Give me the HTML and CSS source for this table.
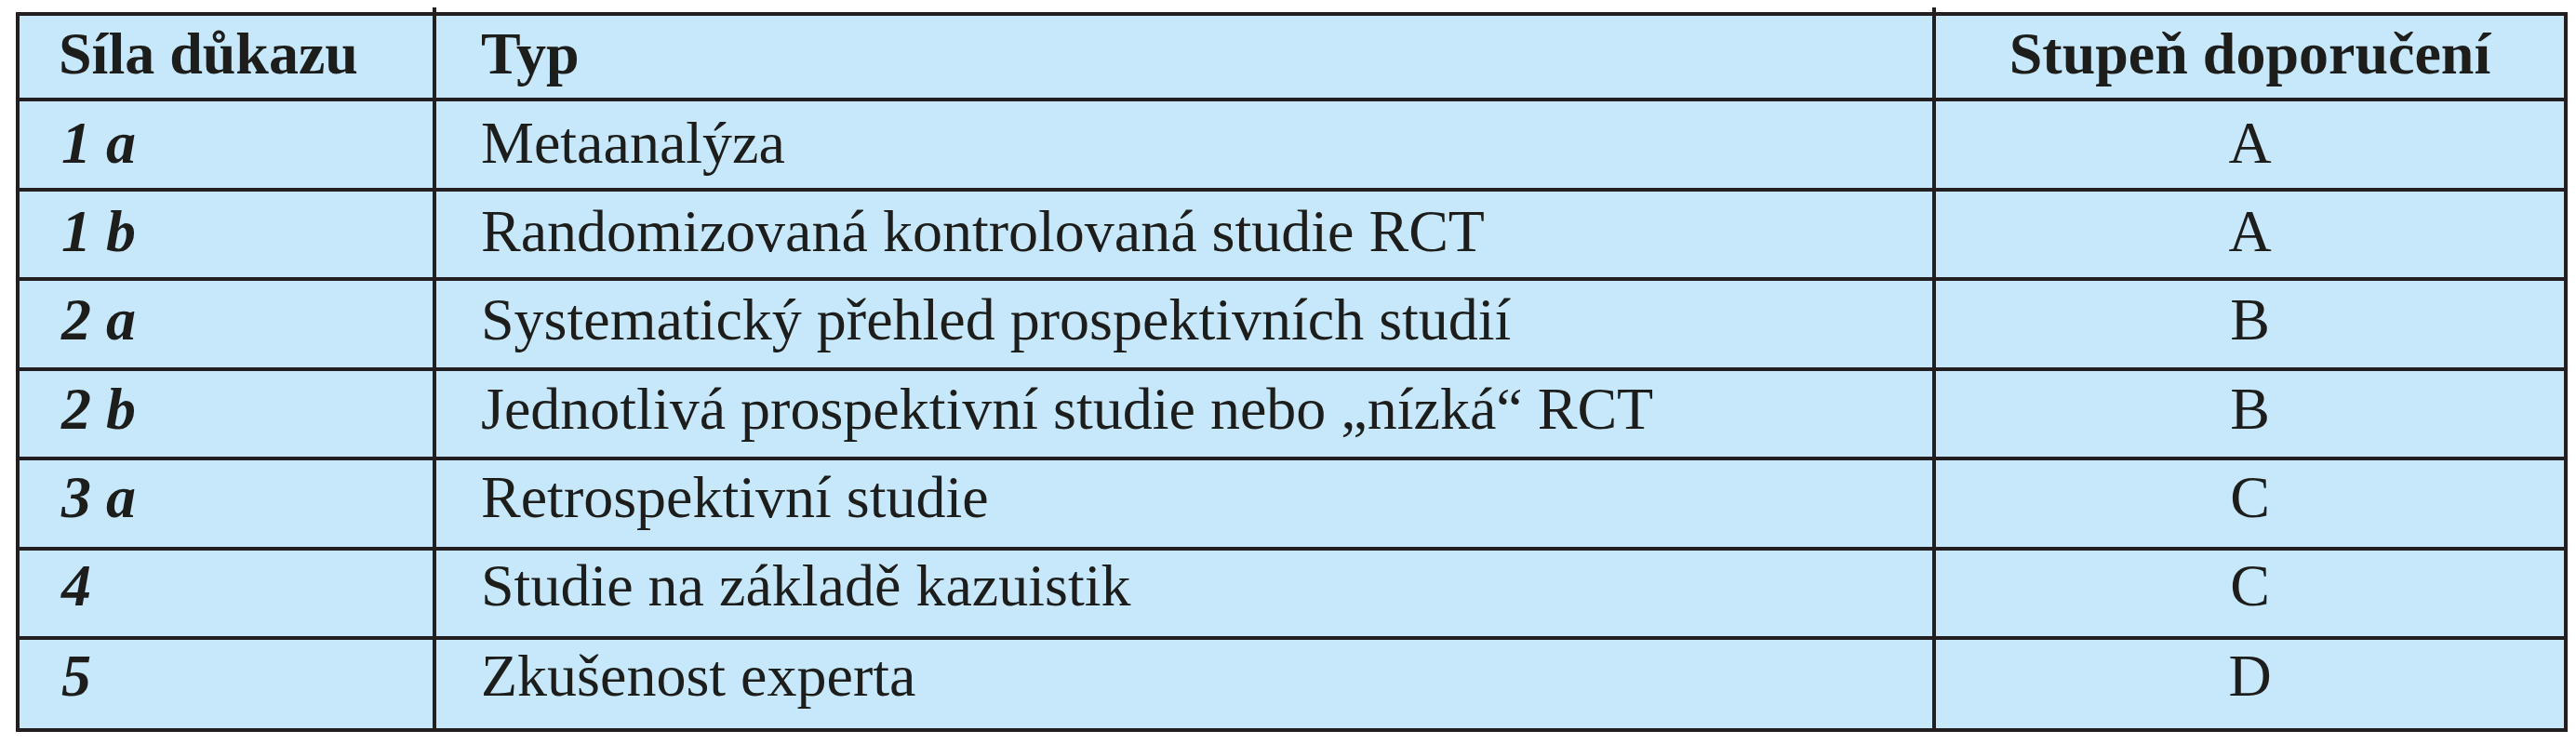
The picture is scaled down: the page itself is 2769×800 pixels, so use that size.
FILE: index.html
```html
<!DOCTYPE html>
<html lang="cs">
<head>
<meta charset="utf-8">
<title>Síla důkazu</title>
<link rel="stylesheet" href="styles.css">
</head>
<body>
<table class="evidence">
  <thead>
    <tr>
      <th class="c-level">Síla důkazu</th>
      <th class="c-type">Typ</th>
      <th class="c-grade">Stupeň doporučení</th>
    </tr>
  </thead>
  <tbody>
    <tr><td class="c-level">1 a</td><td class="c-type">Metaanalýza</td><td class="c-grade">A</td></tr>
    <tr><td class="c-level">1 b</td><td class="c-type">Randomizovaná kontrolovaná studie RCT</td><td class="c-grade">A</td></tr>
    <tr><td class="c-level">2 a</td><td class="c-type">Systematický přehled prospektivních studií</td><td class="c-grade">B</td></tr>
    <tr><td class="c-level">2 b</td><td class="c-type">Jednotlivá prospektivní studie nebo „nízká“ RCT</td><td class="c-grade">B</td></tr>
    <tr><td class="c-level">3 a</td><td class="c-type">Retrospektivní studie</td><td class="c-grade">C</td></tr>
    <tr><td class="c-level">4</td><td class="c-type">Studie na základě kazuistik</td><td class="c-grade">C</td></tr>
    <tr class="last"><td class="c-level">5</td><td class="c-type">Zkušenost experta</td><td class="c-grade">D</td></tr>
  </tbody>
</table>
</body>
</html>
```

FILE: styles.css
```css
html, body {
  margin: 0;
  background: #ffffff;
}

body {
  padding: 13px 0 0 17px;
}

.evidence {
  box-sizing: border-box;
  width: 2743px;
  border-collapse: separate;
  border-spacing: 0;
  table-layout: fixed;
  border: 4px solid #231f20;
  background: #c7e8fa;
  font-family: "Liberation Serif", "Times New Roman", serif;
  font-size: 64px;
  line-height: 1;
  color: #1d1d1b;
}

.evidence th,
.evidence td {
  position: relative;
  box-sizing: border-box;
  padding: 0;
  vertical-align: middle;
  border-right: 4px solid #231f20;
  border-bottom: 4px solid #231f20;
  text-align: left;
}

.evidence th:last-child,
.evidence td:last-child {
  border-right: none;
}

.evidence tr.last td {
  border-bottom: none;
}

.evidence th {
  height: 92px;
  font-weight: bold;
  padding-bottom: 6px;
}

.evidence td {
  height: 96.5px;
  font-weight: normal;
}

.evidence tr.last td {
  height: 95px;
}

/* text sits slightly higher in each successive row, as in the printed table */
.evidence tbody tr:nth-child(1) td { padding-bottom: 3px; }
.evidence tbody tr:nth-child(2) td { padding-bottom: 5px; }
.evidence tbody tr:nth-child(3) td { padding-bottom: 8px; }
.evidence tbody tr:nth-child(4) td { padding-bottom: 10px; }
.evidence tbody tr:nth-child(5) td { padding-bottom: 13px; }
.evidence tbody tr:nth-child(6) td { padding-bottom: 15px; }
.evidence tbody tr:nth-child(7) td { padding-bottom: 18px; }

.evidence th.c-level {
  width: 448px;
}

.evidence th.c-type {
  width: 1612px;
}

.evidence .c-level {
  padding-left: 42px;
}

.evidence td.c-level {
  font-style: italic;
  font-weight: bold;
  padding-left: 45px;
}

.evidence .c-type {
  padding-left: 48px;
}

.evidence .c-grade {
  text-align: center;
}

/* small ticks where the column rules run past the outer frame */
.evidence th.c-type::before,
.evidence th.c-grade::before {
  content: "";
  position: absolute;
  left: -4px;
  top: -9px;
  width: 4px;
  height: 9px;
  background: #231f20;
}

.evidence tr.last td.c-type::after,
.evidence tr.last td.c-grade::after {
  content: "";
  position: absolute;
  left: -4px;
  bottom: -9px;
  width: 4px;
  height: 9px;
  background: #231f20;
}
```
